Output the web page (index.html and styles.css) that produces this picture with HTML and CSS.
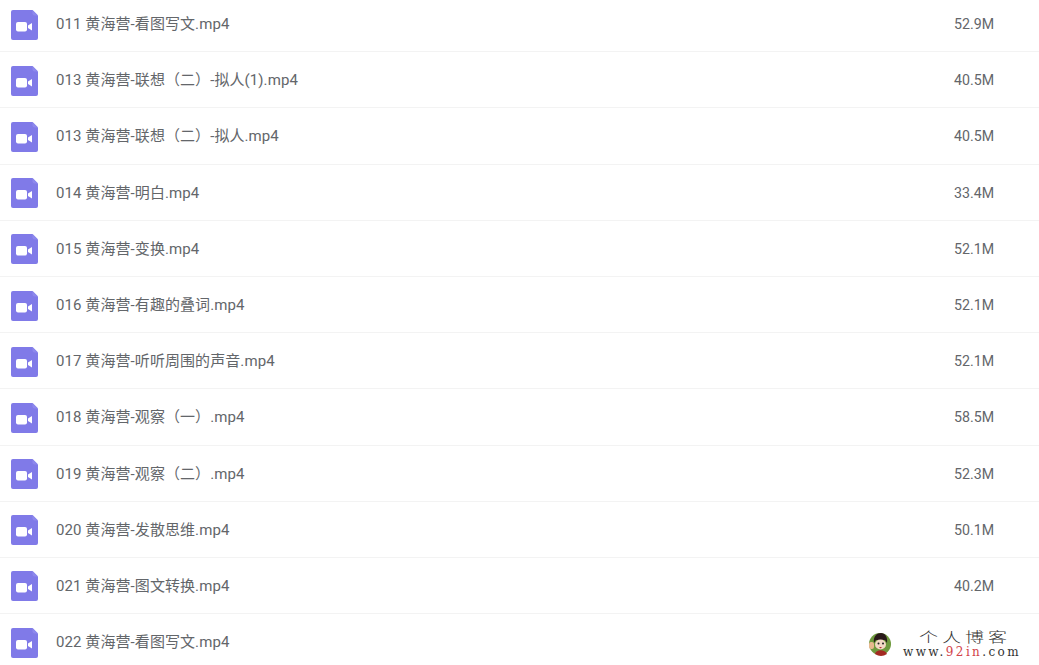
FILE: index.html
```html
<!DOCTYPE html>
<html lang="zh-CN">
<head>
    <meta charset="UTF-8">
    <meta name="viewport" content="width=device-width, initial-scale=1.0">
    <title>文件列表</title>
    <link rel="stylesheet" href="styles.css">
</head>
<body>
    <svg class="sprite" width="0" height="0">
        <symbol id="video-file" viewBox="0 0 27 30">
            <path d="M2 0H21.500L27 5.500V28a2 2 0 0 1-2 2H2a2 2 0 0 1-2-2V2a2 2 0 0 1 2-2Z" fill="#807ae8"/>
            <path d="M21.500 0L27 5.500H23.500a2 2 0 0 1-2-2Z" fill="#8d88ec"/>
            <rect x="5" y="12" width="11" height="9.500" rx="2" fill="#fff"/>
            <path d="M17 15.500L21 13V20.500L17 18Z" fill="#fff"/>
        </symbol>
    </svg>

    <ul class="file-list">
        <li class="file-row"><svg class="file-icon"><use href="#video-file"/></svg><span class="file-name">011 黄海营-看图写文.mp4</span><span class="file-size">52.9M</span></li>
        <li class="file-row"><svg class="file-icon"><use href="#video-file"/></svg><span class="file-name">013 黄海营-联想（二）-拟人(1).mp4</span><span class="file-size">40.5M</span></li>
        <li class="file-row"><svg class="file-icon"><use href="#video-file"/></svg><span class="file-name">013 黄海营-联想（二）-拟人.mp4</span><span class="file-size">40.5M</span></li>
        <li class="file-row"><svg class="file-icon"><use href="#video-file"/></svg><span class="file-name">014 黄海营-明白.mp4</span><span class="file-size">33.4M</span></li>
        <li class="file-row"><svg class="file-icon"><use href="#video-file"/></svg><span class="file-name">015 黄海营-变换.mp4</span><span class="file-size">52.1M</span></li>
        <li class="file-row"><svg class="file-icon"><use href="#video-file"/></svg><span class="file-name">016 黄海营-有趣的叠词.mp4</span><span class="file-size">52.1M</span></li>
        <li class="file-row"><svg class="file-icon"><use href="#video-file"/></svg><span class="file-name">017 黄海营-听听周围的声音.mp4</span><span class="file-size">52.1M</span></li>
        <li class="file-row"><svg class="file-icon"><use href="#video-file"/></svg><span class="file-name">018 黄海营-观察（一）.mp4</span><span class="file-size">58.5M</span></li>
        <li class="file-row"><svg class="file-icon"><use href="#video-file"/></svg><span class="file-name">019 黄海营-观察（二）.mp4</span><span class="file-size">52.3M</span></li>
        <li class="file-row"><svg class="file-icon"><use href="#video-file"/></svg><span class="file-name">020 黄海营-发散思维.mp4</span><span class="file-size">50.1M</span></li>
        <li class="file-row"><svg class="file-icon"><use href="#video-file"/></svg><span class="file-name">021 黄海营-图文转换.mp4</span><span class="file-size">40.2M</span></li>
        <li class="file-row"><svg class="file-icon"><use href="#video-file"/></svg><span class="file-name">022 黄海营-看图写文.mp4</span></li>
    </ul>

    <div class="watermark">
        <svg class="watermark-face" viewBox="0 0 24 24">
            <circle cx="12" cy="12" r="11" fill="#6f9a3e"/>
            <path d="M6 11C5 4 9 1 13 1s7 4 6 10l-2-3H8Z" fill="#2a1a1a"/>
            <ellipse cx="12.500" cy="12.500" rx="5.500" ry="5" fill="#f4d9c4"/>
            <circle cx="10.500" cy="11.500" r="1" fill="#222"/>
            <circle cx="15" cy="11.500" r="1" fill="#222"/>
            <path d="M11 15h3l-1.500 1.500Z" fill="#b03030"/>
            <path d="M7 22c1-5 10-5 12 0a11 11 0 0 1-12 0Z" fill="#a32a22"/>
            <rect x="1" y="10" width="5" height="7" rx="2" fill="#e8b98f"/>
        </svg>
        <div class="watermark-text">
            <div class="watermark-title">个人博客</div>
            <div class="watermark-url">www.<span class="watermark-red">92in</span>.com</div>
        </div>
    </div>
</body>
</html>
```

FILE: styles.css
```css
body {
    margin: 0;
    height: 665px;
    overflow: hidden;
    background-color: #fff;
    font-family: Roboto, "Noto Sans CJK SC", sans-serif;
    font-size: 15px;
    color: #63666a;
}
.sprite {
    position: absolute;
}
.file-list {
    list-style: none;
    margin: -4px 0 0;
    padding: 0;
}
.file-row {
    display: flex;
    align-items: center;
    box-sizing: border-box;
    height: 56.2px;
    padding: 0 0 2px 11px;
    border-bottom: 1px solid #f3f3f3;
}
.file-icon {
    width: 27px;
    height: 30px;
    margin-top: 4px;
    flex-shrink: 0;
}
.file-name {
    margin-left: 18px;
    flex: 1;
    letter-spacing: 0.08px;
}
.file-size {
    width: 85px;
    margin-top: 3px;
    font-size: 14.2px;
}
.watermark {
    position: absolute;
    left: 868px;
    top: 630px;
    display: flex;
    align-items: center;
}
.watermark-face {
    width: 24px;
    height: 24px;
}
.watermark-text {
    margin-left: 11px;
    color: #333;
}
.watermark-title {
    width: 92px;
    margin-left: 16px;
    font-size: 19px;
    line-height: 16px;
    letter-spacing: 4px;
    font-weight: 300;
    white-space: nowrap;
    transform: scaleY(0.72);
}
.watermark-url {
    font-family: "DejaVu Serif", serif;
    font-size: 12px;
    line-height: 12px;
    letter-spacing: 2.4px;
    white-space: nowrap;
}
.watermark-red {
    color: #d2434a;
}
```
